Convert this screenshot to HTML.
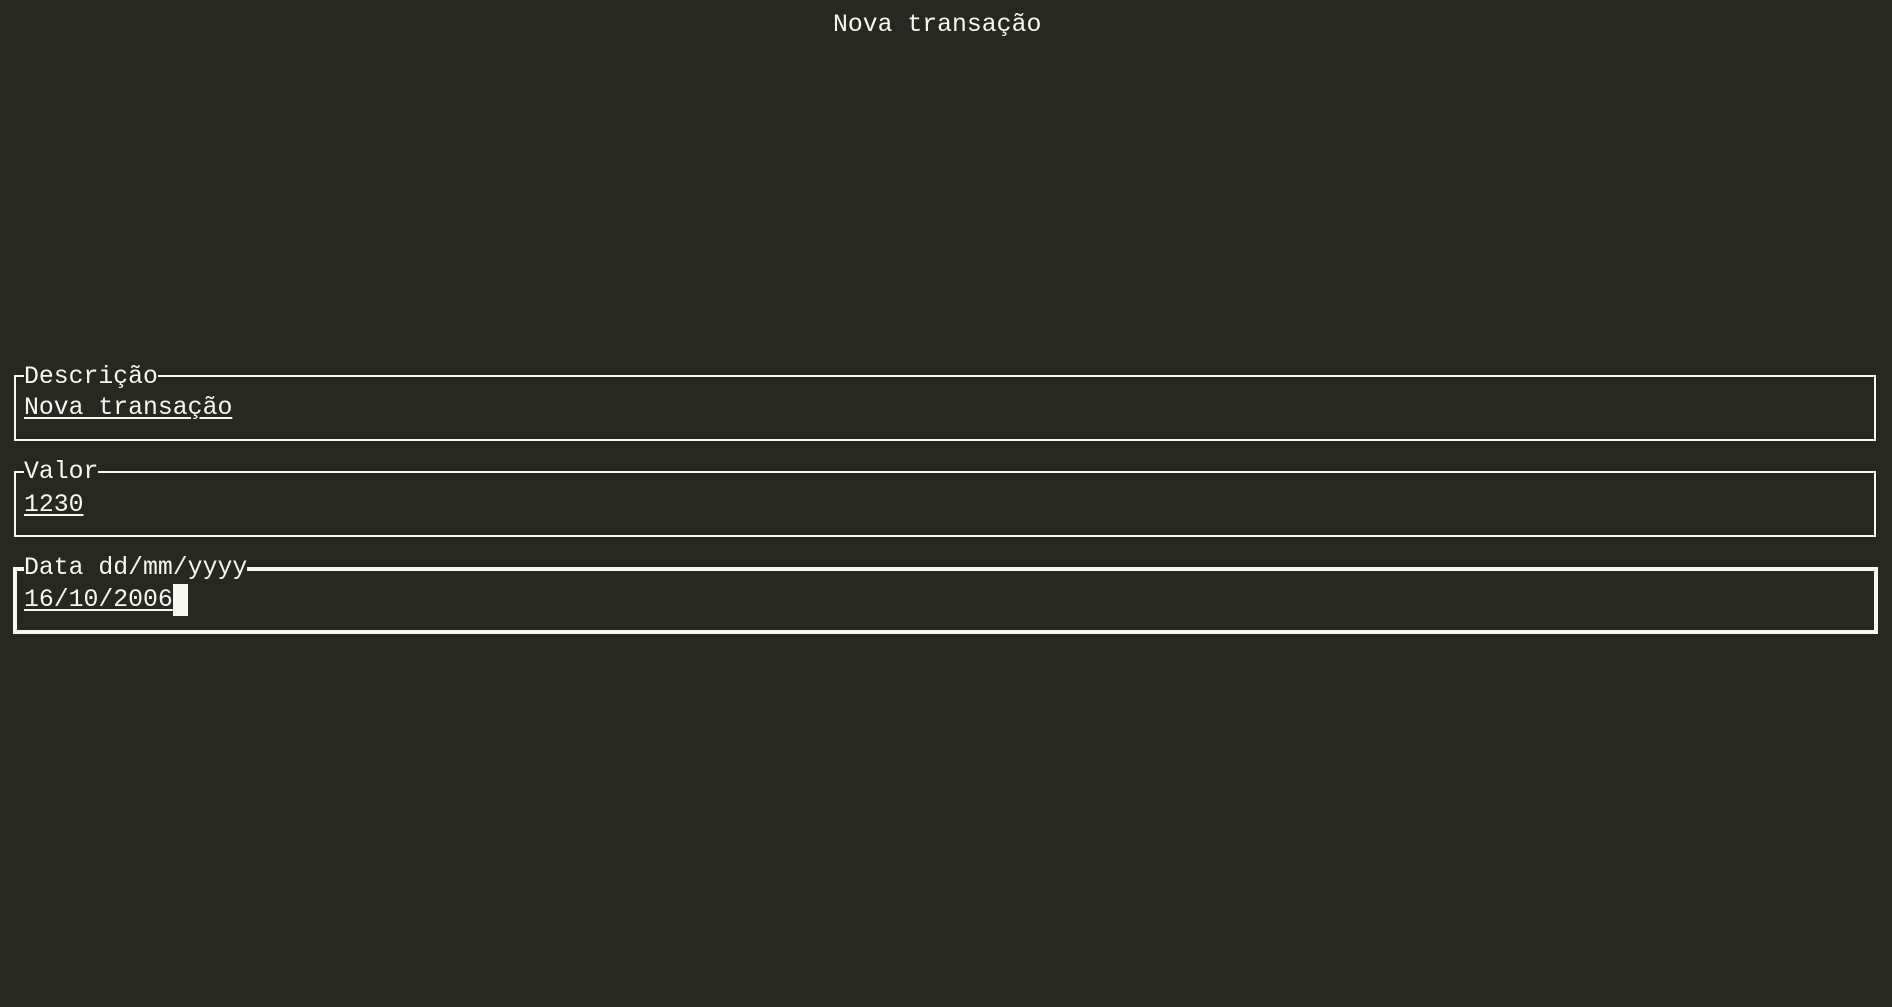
<!DOCTYPE html>
<html><head><meta charset="utf-8"><style>
html,body{margin:0;padding:0;background:#272822;width:1892px;height:1007px;overflow:hidden}
body{position:relative;font-family:"Liberation Mono","DejaVu Sans Mono",monospace;font-size:24.8px;color:#f8f8f2}
.t{position:absolute;line-height:30px;white-space:pre}
.u{text-decoration:underline;text-underline-offset:3px;text-decoration-thickness:2px}
.box{position:absolute;border:2px solid #f8f8f2;box-sizing:border-box}
.lbl{background:#272822}
</style></head><body>
<div class="t" style="left:833px;top:10px">Nova transação</div>

<div class="box" style="left:14px;top:375px;width:1862px;height:66px"></div>
<div class="t lbl" style="left:24px;top:362px">Descrição</div>
<div class="t u" style="left:24px;top:393px">Nova transação</div>

<div class="box" style="left:14px;top:471px;width:1862px;height:66px"></div>
<div class="t lbl" style="left:24px;top:457px">Valor</div>
<div class="t u" style="left:24px;top:490px">1230</div>

<div class="box" style="left:13px;top:567px;width:1865px;height:67px;border-width:4px"></div>
<div class="t lbl" style="left:24px;top:553px">Data dd/mm/yyyy</div>
<div class="t u" style="left:24px;top:585px">16/10/2006</div>
<div style="position:absolute;left:173px;top:584px;width:15px;height:32px;background:#f8f8f2"></div>
</body></html>
